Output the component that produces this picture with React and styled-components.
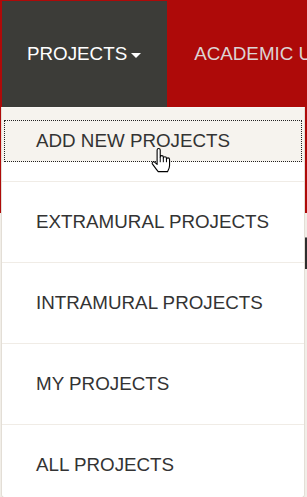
import React from "react";
import styled, { createGlobalStyle } from "styled-components";

const Global = createGlobalStyle`
  html, body { margin: 0; padding: 0; }
  body {
    background: #f1eee8;
    font-family: "Liberation Sans", Arial, sans-serif;
    overflow: hidden;
  }
`;

const Page = styled.div`
  position: relative;
  width: 307px;
  height: 497px;
  overflow: hidden;
`;

const Navbar = styled.nav`
  display: flex;
  align-items: flex-start;
  height: 213px;
  padding: 1px 0 0 2px;
  box-sizing: border-box;
  background: #ae0a09;
  white-space: nowrap;
  overflow: hidden;
`;

const NavItem = styled.div`
  display: flex;
  align-items: center;
  flex-shrink: 0;
  height: 106px;
  padding: 0 26px 0 ${(p) => (p.$active ? 25 : 27)}px;
  background: ${(p) => (p.$active ? "#3c3c38" : "transparent")};
  color: ${(p) => (p.$active ? "#ffffff" : "#dcd4d4")};
  font-size: 18.8px;
`;

const Caret = styled.span`
  display: inline-block;
  margin-left: 4px;
  margin-top: 2px;
  width: 0;
  height: 0;
  border-left: 5.5px solid transparent;
  border-right: 5.5px solid transparent;
  border-top: 5.5px solid #ffffff;
`;

const Content = styled.div`
  display: flex;
  justify-content: flex-end;
  padding-top: 24px;
`;

const Field = styled.div`
  width: 2px;
  height: 31px;
  background: #2e2e2e;
  border-top: 1px solid #8a8a8a;
`;

const Dropdown = styled.ul`
  position: absolute;
  top: 107px;
  left: 1px;
  width: 304px;
  box-sizing: border-box;
  margin: 0;
  padding: 0;
  list-style: none;
  background: #ffffff;
  border: 1px solid #e3ded6;
  border-top: 1px solid #faf8f5;
  border-radius: 0 0 4px 4px;
`;

const Item = styled.li`
  padding: ${(p) => (p.$active ? "12px" : "19px")} 2px 19px;
  border-bottom: 1px solid #f0ece6;
  background: ${(p) =>
    p.$active ? "linear-gradient(to bottom, #f6f3ee 54px, #ffffff 54px)" : "#ffffff"};

  &:last-child {
    border-bottom: none;
    padding-bottom: 11px;
    border-radius: 0 0 4px 4px;
  }
`;

const Link = styled.a`
  display: block;
  height: 42px;
  line-height: 42px;
  padding-left: 32px;
  color: #333333;
  font-size: 18.8px;
  text-decoration: none;
  outline: ${(p) => (p.$focused ? "1px dotted #222" : "none")};
  outline-offset: -1px;
`;

const Cursor = styled.svg`
  position: absolute;
  left: 151px;
  top: 147px;
  width: 20px;
  height: 26px;
`;

const items = [
  "ADD NEW PROJECTS",
  "EXTRAMURAL PROJECTS",
  "INTRAMURAL PROJECTS",
  "MY PROJECTS",
  "ALL PROJECTS",
];

export default function App() {
  return (
    <>
      <Global />
      <Page>
        <Navbar>
          <NavItem $active>
            PROJECTS<Caret />
          </NavItem>
          <NavItem>ACADEMIC UNITS</NavItem>
        </Navbar>
        <Content>
          <Field />
        </Content>
        <Dropdown>
          {items.map((t, i) => (
            <Item key={t} $active={i === 0}>
              <Link href="#" $focused={i === 0}>
                {t}
              </Link>
            </Item>
          ))}
        </Dropdown>
        <Cursor viewBox="-0.5 -0.5 18 23">
          <path
            d="M5 13 V2 a1.4 1.4 0 0 1 2.8 0 V8.5 a1.4 1.4 0 0 1 2.8 0 V9.5 a1.4 1.4 0 0 1 2.8 0 V10.5 a1.4 1.4 0 0 1 2.8 0 V16 c0 2.5 -1 4 -1.8 5.5 H6 c-1.5 -2 -3.5 -4.5 -5.3 -7 a1.3 1.3 0 0 1 2 -1.6 L5 15 Z"
            fill="#ffffff"
            stroke="#000000"
            strokeWidth="1"
            strokeLinejoin="round"
          />
          <path d="M7.8 8.5 V13 M10.6 9.5 V13 M13.4 10.5 V13" stroke="#000" strokeWidth="0.9" fill="none" />
        </Cursor>
      </Page>
    </>
  );
}
